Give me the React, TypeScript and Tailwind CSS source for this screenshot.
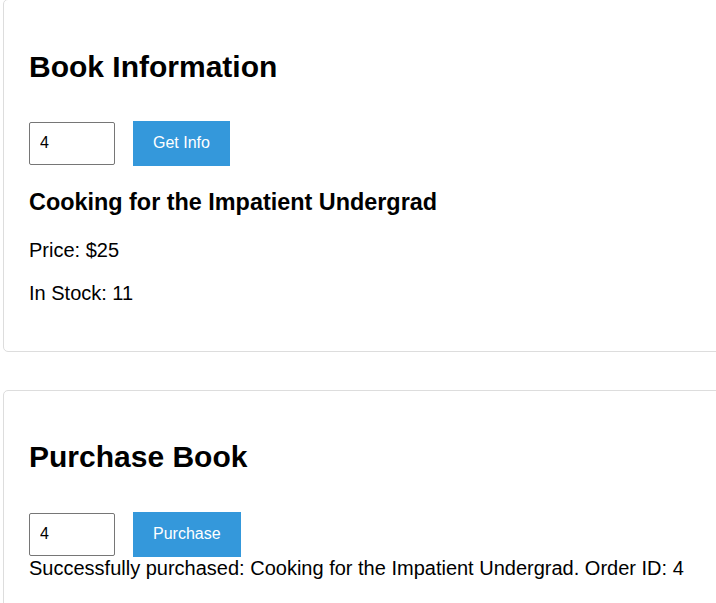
import { useState } from "react";

export default function App() {
  const [bookId, setBookId] = useState("4");
  const [purchaseId, setPurchaseId] = useState("4");

  return (
    <div className="h-screen w-screen overflow-hidden bg-white font-['Liberation_Sans',Arial,sans-serif] text-[20px] text-black">
      <div className="-mt-[1px] ml-[3px] flex w-[780px] flex-col gap-[38px]">
        {/* Book info card */}
        <section className="rounded-[5px] border border-[#dddddd] px-[25px] pt-[25px] pb-[46px]">
          <h2 className="mt-[25px] text-[30px] font-bold leading-[34.5px]">Book Information</h2>
          <div className="mt-[36px] flex items-center gap-[18px]">
            <input
              value={bookId}
              onChange={(e) => setBookId(e.target.value)}
              className="h-[43px] w-[86px] rounded-[2px] border border-[#767676] pl-[10px] text-[16px] outline-none"
            />
            <button className="h-[45px] bg-[#3498db] px-[20px] text-[16px] text-white">Get Info</button>
          </div>
          <h3 className="mt-[23.5px] text-[23.4px] font-bold leading-[27px]">Cooking for the Impatient Undergrad</h3>
          <p className="mt-[23px] leading-[23px]">Price: $25</p>
          <p className="mt-[20px] leading-[23px]">In Stock: 11</p>
        </section>

        {/* Purchase card */}
        <section className="rounded-[5px] border border-[#dddddd] px-[25px] pt-[25px] pb-[45px]">
          <h2 className="mt-[24px] text-[30px] font-bold leading-[34.5px]">Purchase Book</h2>
          <div className="mt-[37px] flex items-center gap-[18px]">
            <input
              value={purchaseId}
              onChange={(e) => setPurchaseId(e.target.value)}
              className="h-[43px] w-[86px] rounded-[2px] border border-[#767676] pl-[10px] text-[16px] outline-none"
            />
            <button className="h-[45px] bg-[#3498db] px-[20px] text-[16px] text-white">Purchase</button>
          </div>
          <div className="leading-[23px]">
            Successfully purchased: Cooking for the Impatient Undergrad. Order ID: 4
          </div>
        </section>
      </div>
    </div>
  );
}
